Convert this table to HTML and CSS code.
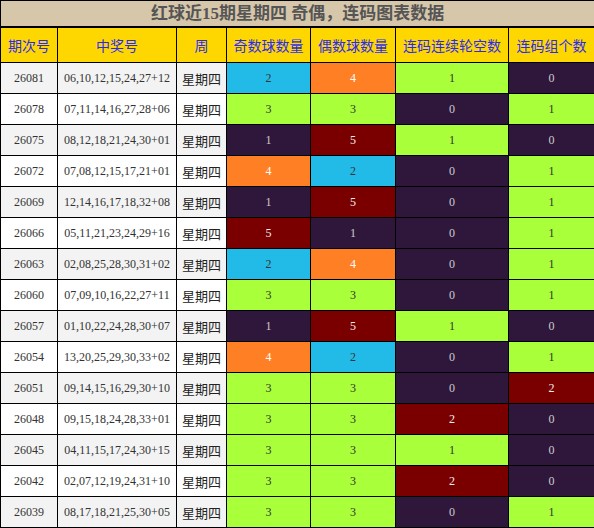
FILE: index.html
```html
<!DOCTYPE html>
<html lang="zh-CN">
<head>
  <meta charset="UTF-8" />
  <title>红球近15期星期四 奇偶，连码图表数据</title>
  <link rel="stylesheet" href="styles.css">
</head>
<body>
  <table class="chart">
    <colgroup>
      <col class="w-issue">
      <col class="w-nums">
      <col class="w-week">
      <col class="w-odd">
      <col class="w-even">
      <col class="w-miss">
      <col class="w-group">
    </colgroup>
    <thead>
      <tr class="title-row">
        <th colspan="7">红球近15期星期四 奇偶，连码图表数据</th>
      </tr>
      <tr class="head-row">
        <th>期次号</th>
        <th>中奖号</th>
        <th>周</th>
        <th>奇数球数量</th>
        <th>偶数球数量</th>
        <th>连码连续轮空数</th>
        <th>连码组个数</th>
      </tr>
    </thead>
    <tbody>
      <tr><td>26081</td><td>06,10,12,15,24,27+12</td><td class="wk">星期四</td><td class="cy">2</td><td class="or">4</td><td class="lm">1</td><td class="dk">0</td></tr>
      <tr><td>26078</td><td>07,11,14,16,27,28+06</td><td class="wk">星期四</td><td class="lm">3</td><td class="lm">3</td><td class="dk">0</td><td class="lm">1</td></tr>
      <tr><td>26075</td><td>08,12,18,21,24,30+01</td><td class="wk">星期四</td><td class="dk">1</td><td class="mr">5</td><td class="lm">1</td><td class="dk">0</td></tr>
      <tr><td>26072</td><td>07,08,12,15,17,21+01</td><td class="wk">星期四</td><td class="or">4</td><td class="cy">2</td><td class="dk">0</td><td class="lm">1</td></tr>
      <tr><td>26069</td><td>12,14,16,17,18,32+08</td><td class="wk">星期四</td><td class="dk">1</td><td class="mr">5</td><td class="dk">0</td><td class="lm">1</td></tr>
      <tr><td>26066</td><td>05,11,21,23,24,29+16</td><td class="wk">星期四</td><td class="mr">5</td><td class="dk">1</td><td class="dk">0</td><td class="lm">1</td></tr>
      <tr><td>26063</td><td>02,08,25,28,30,31+02</td><td class="wk">星期四</td><td class="cy">2</td><td class="or">4</td><td class="dk">0</td><td class="lm">1</td></tr>
      <tr><td>26060</td><td>07,09,10,16,22,27+11</td><td class="wk">星期四</td><td class="lm">3</td><td class="lm">3</td><td class="dk">0</td><td class="lm">1</td></tr>
      <tr><td>26057</td><td>01,10,22,24,28,30+07</td><td class="wk">星期四</td><td class="dk">1</td><td class="mr">5</td><td class="lm">1</td><td class="dk">0</td></tr>
      <tr><td>26054</td><td>13,20,25,29,30,33+02</td><td class="wk">星期四</td><td class="or">4</td><td class="cy">2</td><td class="dk">0</td><td class="lm">1</td></tr>
      <tr><td>26051</td><td>09,14,15,16,29,30+10</td><td class="wk">星期四</td><td class="lm">3</td><td class="lm">3</td><td class="dk">0</td><td class="mr">2</td></tr>
      <tr><td>26048</td><td>09,15,18,24,28,33+01</td><td class="wk">星期四</td><td class="lm">3</td><td class="lm">3</td><td class="mr">2</td><td class="dk">0</td></tr>
      <tr><td>26045</td><td>04,11,15,17,24,30+15</td><td class="wk">星期四</td><td class="lm">3</td><td class="lm">3</td><td class="lm">1</td><td class="dk">0</td></tr>
      <tr><td>26042</td><td>02,07,12,19,24,31+10</td><td class="wk">星期四</td><td class="lm">3</td><td class="lm">3</td><td class="mr">2</td><td class="dk">0</td></tr>
      <tr><td>26039</td><td>08,17,18,21,25,30+05</td><td class="wk">星期四</td><td class="lm">3</td><td class="lm">3</td><td class="dk">0</td><td class="lm">1</td></tr>
    </tbody>
  </table>
</body>
</html>
```

FILE: styles.css
```css
body {
  margin: 0;
  padding: 0;
  background: #fff;
  font-family: "Liberation Serif", "Noto Sans CJK SC", serif;
}
.chart {
  width: 594px;
  border-collapse: collapse;
  table-layout: fixed;
  border: 1px solid #000;
}
.w-issue { width: 57px; }
.w-nums { width: 119px; }
.w-week { width: 50px; }
.w-odd { width: 84px; }
.w-even { width: 85px; }
.w-miss { width: 113px; }
.w-group { width: 86px; }

.chart th,
.chart td {
  border: 1px solid #000;
  padding: 0;
  text-align: center;
  white-space: nowrap;
  overflow: hidden;
}
.title-row th {
  height: 25px;
  background: #d6c6aa;
  color: #555;
  font-size: 17px;
  font-weight: bold;
  border-bottom: 2px solid #000;
  line-height: 25px;
}
.head-row th {
  height: 34px;
  background: #ffd700;
  color: #2b2bf0;
  font-size: 14px;
  font-weight: normal;
  font-family: "Noto Sans CJK SC", sans-serif;
}

.chart tbody td {
  height: 30px;
  font-size: 12px;
  color: #333;
}
.chart tbody tr:nth-child(odd) td {
  background: #f3f3f3;
}
.chart tbody tr td.wk {
  font-family: "Noto Sans CJK SC", sans-serif;
  font-size: 13px;
  color: #222;
}
.chart tbody tr td.cy { background: #22bbe8; color: #333; }
.chart tbody tr td.or { background: #ff8024; color: #fff; }
.chart tbody tr td.lm { background: #a9ff3a; color: #333; }
.chart tbody tr td.dk { background: #2f173c; color: #ccc; }
.chart tbody tr td.mr { background: #7a0000; color: #eee; }
```
